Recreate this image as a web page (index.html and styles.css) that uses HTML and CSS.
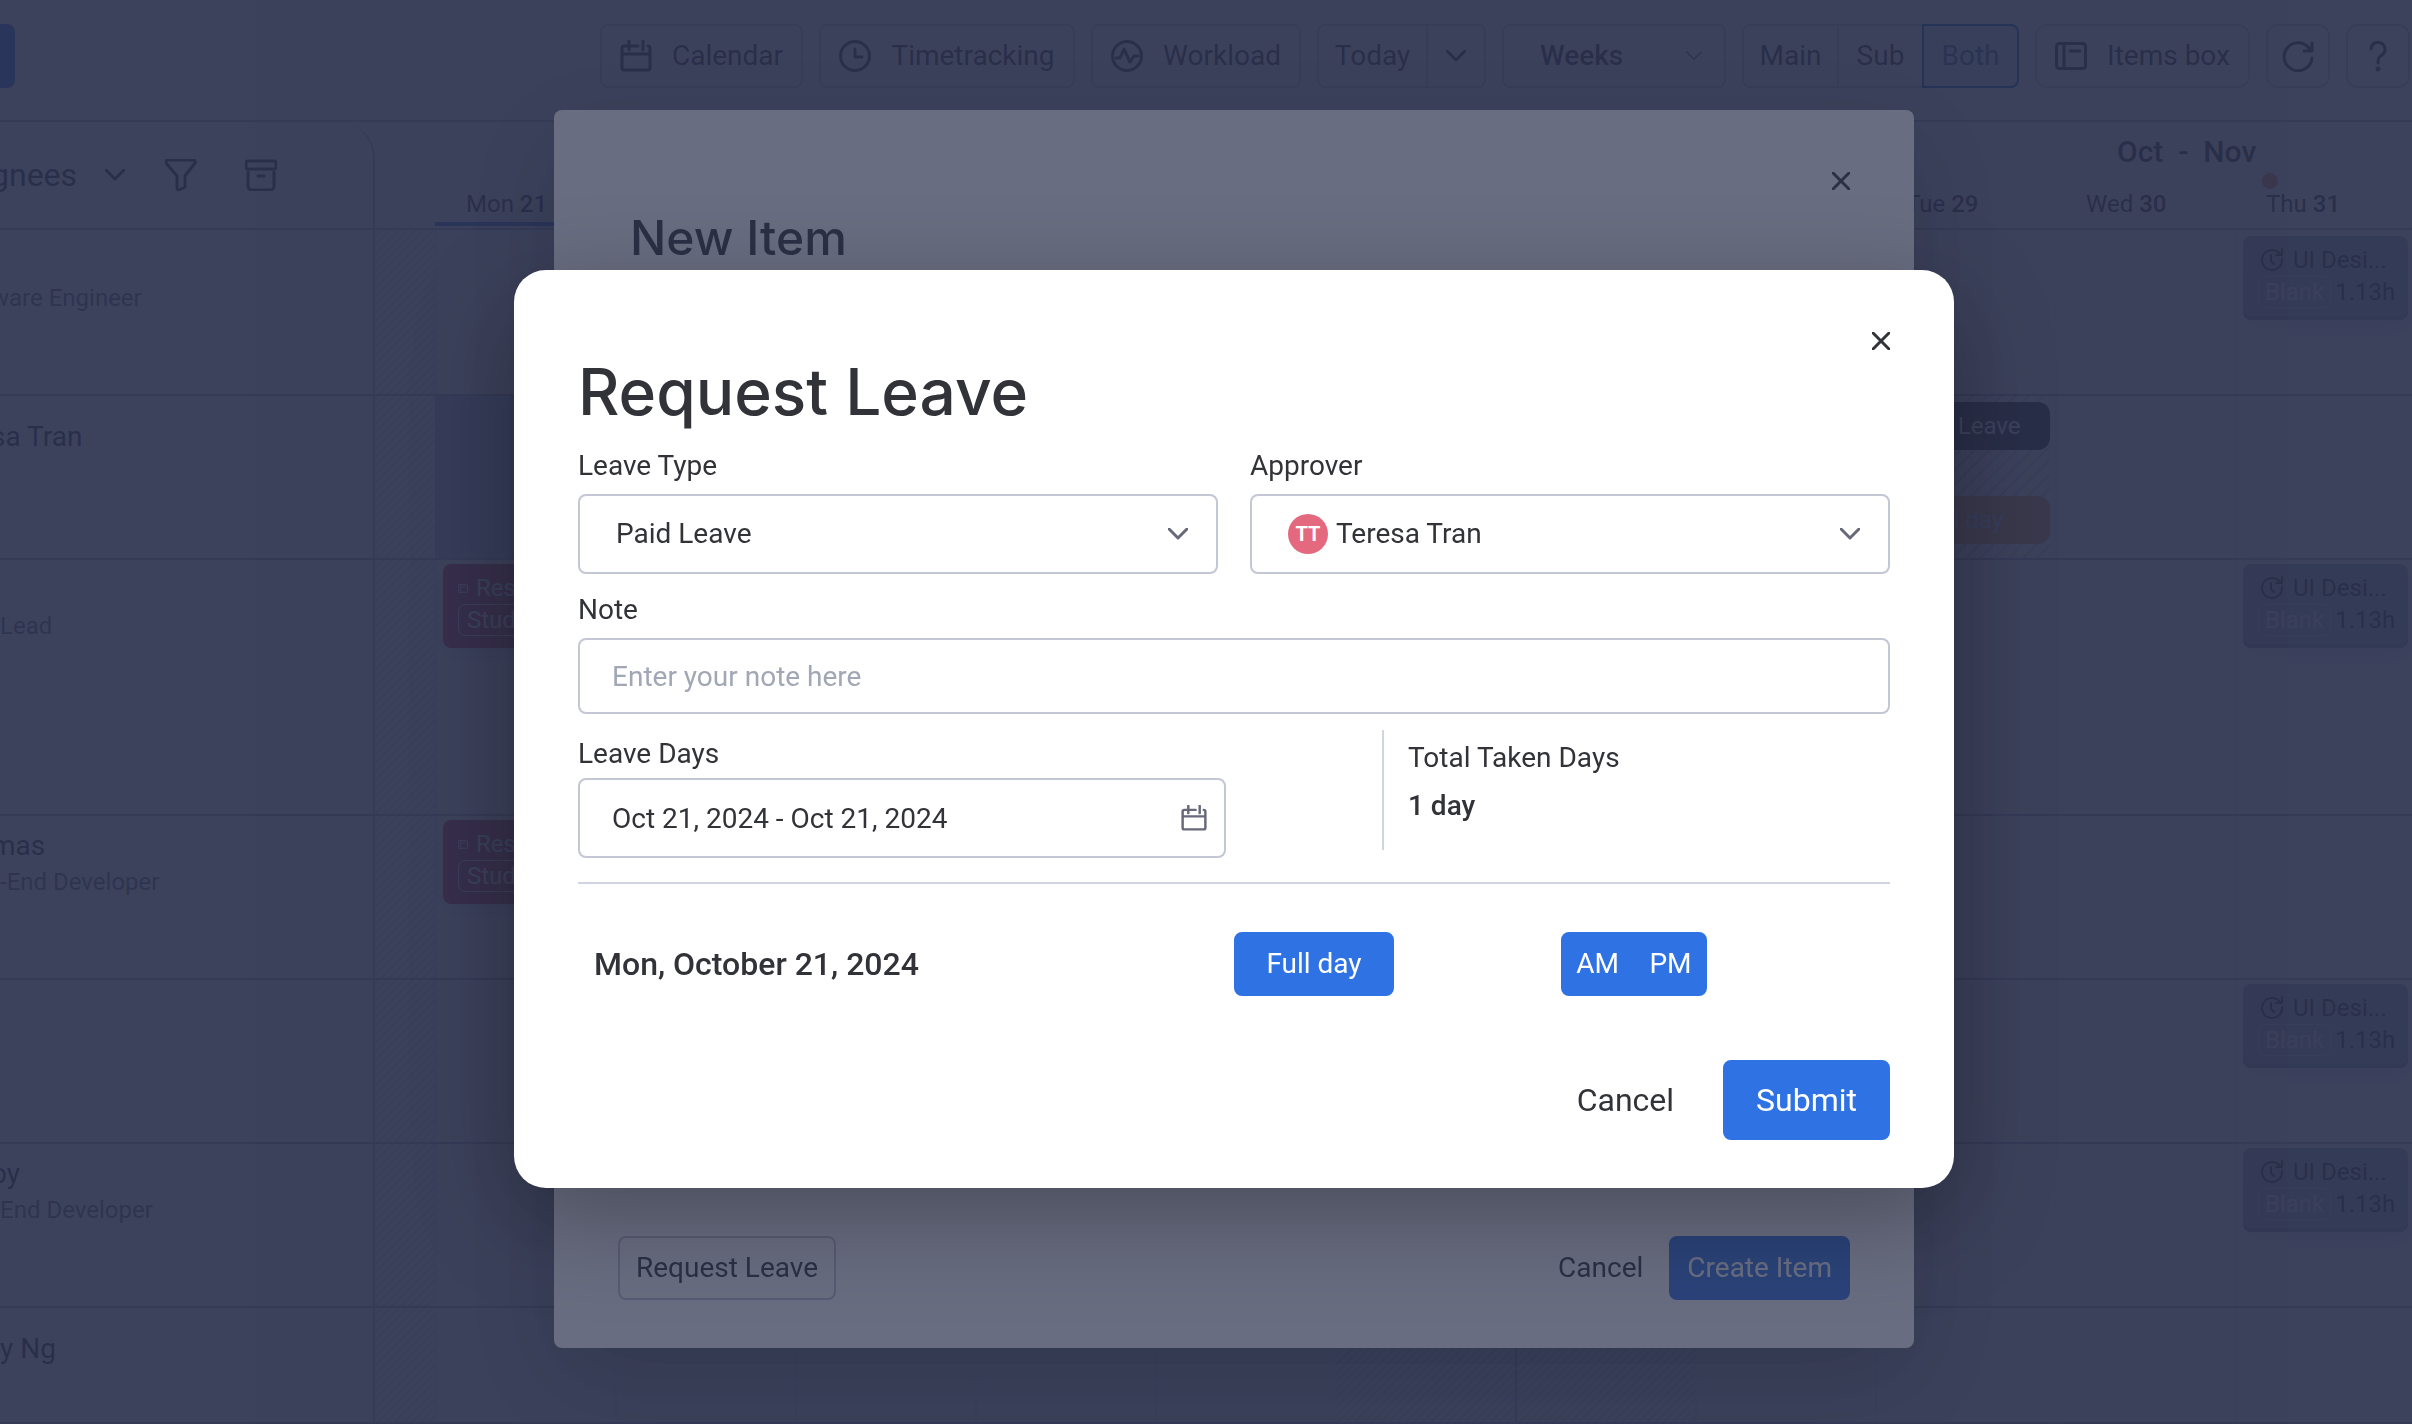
FILE: index.html
```html
<!doctype html>
<html lang="en">
<head>
  <meta charset="UTF-8">
  <title>Request Leave</title>
  <link rel="stylesheet" href="styles.css">
</head>
<body>
  <!-- shared icons -->
  <svg class="sprite" width="0" height="0" aria-hidden="true">
    <symbol id="i-calendar" viewBox="0 0 32 32"><path d="M8 6H4a2 2 0 0 0-2 2v20a2 2 0 0 0 2 2h24a2 2 0 0 0 2-2V8a2 2 0 0 0-2-2M2 14h28M9 1v9M23 1v9M9 6h9"/></symbol>
    <symbol id="i-down" viewBox="0 0 20 12"><path d="M1 1l9 9 9-9"/></symbol>
    <symbol id="i-close" viewBox="0 0 18 18"><path d="M1 1l16 16M17 1L1 17"/></symbol>
    <symbol id="i-redo" viewBox="0 0 24 24"><path d="M20 6a10 10 0 1 0 2 5M22 1v6h-6M11 7v6l3 3"/></symbol>
    <symbol id="i-box" viewBox="0 0 32 28"><rect x="1.500" y="1.500" width="29" height="25" rx="3"/><path d="M9 2v24M15 9h10"/></symbol>
  </svg>

  <div class="app">
    <header class="toolbar">
      <button class="btn primary new-item" aria-label="New"></button>
      <div class="tools">
        <button class="btn w-calendar"><svg class="icon"><use href="#i-calendar"/></svg>Calendar</button>
        <button class="btn w-time"><svg class="icon" viewBox="0 0 32 32"><circle cx="16" cy="16" r="14.500"/><path d="M16 9v8h7"/></svg>Timetracking</button>
        <button class="btn w-load"><svg class="icon" viewBox="0 0 32 32"><circle cx="16" cy="16" r="14.500"/><path d="M5 18h4l4-9 6 13 4-6h4"/></svg>Workload</button>
        <div class="group">
          <button class="btn w-today">Today</button>
          <button class="btn w-more" aria-label="More"><svg class="chev"><use href="#i-down"/></svg></button>
        </div>
        <div class="picker w-weeks">
          <select class="btn" aria-label="Scale"><option>Weeks</option></select>
          <svg class="chev small"><use href="#i-down"/></svg>
        </div>
        <div class="group">
          <button class="btn w-main">Main</button>
          <button class="btn w-sub">Sub</button>
          <button class="btn w-main active">Both</button>
        </div>
        <button class="btn round w-items"><svg class="icon"><use href="#i-box"/></svg>Items box</button>
        <button class="btn round square" aria-label="Refresh"><svg class="icon" viewBox="0 0 32 32"><path d="M27 8a14 14 0 1 0 3 10M30 3v8h-8"/></svg></button>
        <button class="btn round square" aria-label="Help"><svg class="icon" viewBox="0 0 32 32"><path d="M9 9a7 7 0 1 1 11 6c-3 2-4 3-4 8"/><circle cx="16" cy="29" r="1"/></svg></button>
      </div>
    </header>

    <div class="days-head row-grid">
      <div class="assignees">
        <span class="cut">gnees</span>
        <svg class="chev"><use href="#i-down"/></svg>
        <svg class="icon" viewBox="0 0 32 32"><path d="M3 1h26a2 2 0 0 1 1 3L20 17v11l-6 3a2 2 0 0 1-2-2V17L1 4a2 2 0 0 1 2-3z"/></svg>
        <svg class="icon" viewBox="0 0 32 32"><rect x="1" y="2" width="30" height="8" rx="2"/><path d="M3 13v14a4 4 0 0 0 4 4h18a4 4 0 0 0 4-4V13M13 17h6"/></svg>
      </div>
      <div class="day today">Mon <b>21</b></div>
      <div class="day tue">Tue <b>29</b></div>
      <div class="day wed">Wed <b>30</b><span class="month">Oct&nbsp; -&nbsp; Nov</span></div>
      <div class="day thu">Thu <b>31</b><i class="dot"></i></div>
    </div>

    <div class="board">
      <div class="columns row-grid">
        <i class="edge"></i><i class="off"></i><i></i><i></i><i></i><i></i><i></i><i class="off"></i><i class="off sun"></i><i></i><i></i><i></i><i></i>
      </div>
      <div class="row row-grid">
        <div class="person"><p class="name">&nbsp;</p><p class="job cut">ware Engineer</p></div>
        <div class="card thu">
          <p><svg class="redo"><use href="#i-redo"/></svg>UI Desi...</p>
          <p><span class="tag">Blank</span>1.13h</p>
        </div>
      </div>
      <div class="row row-grid">
        <div class="person single"><p class="name cut">sa Tran</p></div>
        <div class="away"></div>
        <div class="leave tue">
          <span class="bar dark">Paid Leave</span>
          <span class="bar orange">Full day</span>
        </div>
      </div>
      <div class="row tall row-grid">
        <div class="person"><p class="name">&nbsp;</p><p class="job">Lead</p></div>
        <div class="card red">
          <p><svg class="mini"><use href="#i-box"/></svg>Res</p>
          <p><span class="tag">Stud</span></p>
        </div>
        <div class="card thu">
          <p><svg class="redo"><use href="#i-redo"/></svg>UI Desi...</p>
          <p><span class="tag">Blank</span>1.13h</p>
        </div>
      </div>
      <div class="row row-grid">
        <div class="person"><p class="name cut">mas</p><p class="job">-End Developer</p></div>
        <div class="card red">
          <p><svg class="mini"><use href="#i-box"/></svg>Res</p>
          <p><span class="tag">Stud</span></p>
        </div>
      </div>
      <div class="row row-grid">
        <div class="person"></div>
        <div class="card thu">
          <p><svg class="redo"><use href="#i-redo"/></svg>UI Desi...</p>
          <p><span class="tag">Blank</span>1.13h</p>
        </div>
      </div>
      <div class="row row-grid">
        <div class="person"><p class="name cut">oy</p><p class="job">End Developer</p></div>
        <div class="card thu">
          <p><svg class="redo"><use href="#i-redo"/></svg>UI Desi...</p>
          <p><span class="tag">Blank</span>1.13h</p>
        </div>
      </div>
      <div class="row row-grid">
        <div class="person single"><p class="name">y Ng</p></div>
      </div>
    </div>
  </div>

  <!-- new item dialog -->
  <div class="overlay">
    <section class="modal item-modal">
      <div class="modal-head"><button class="close" aria-label="Close"><svg><use href="#i-close"/></svg></button></div>
      <div class="modal-body">
        <h2>New Item</h2>
        <div class="modal-foot">
          <button class="btn request">Request Leave</button>
          <button class="btn plain">Cancel</button>
          <button class="btn primary">Create Item</button>
        </div>
      </div>
    </section>
  </div>

  <!-- request leave dialog -->
  <div class="overlay">
    <form class="modal leave-modal">
      <div class="modal-head"><button type="button" class="close" aria-label="Close"><svg><use href="#i-close"/></svg></button></div>
      <div class="modal-body">
        <h1>Request Leave</h1>
        <div class="two">
          <div class="field">
            <label for="type">Leave Type</label>
            <div class="picker">
              <select id="type"><option>Paid Leave</option></select>
              <svg class="chev"><use href="#i-down"/></svg>
            </div>
          </div>
          <div class="field">
            <label for="approver">Approver</label>
            <div class="picker">
              <span class="avatar">TT</span>
              <select id="approver" class="with-avatar"><option>Teresa Tran</option></select>
              <svg class="chev"><use href="#i-down"/></svg>
            </div>
          </div>
        </div>
        <div class="field note">
          <label for="note">Note</label>
          <input id="note" type="text" placeholder="Enter your note here">
        </div>
        <div class="period">
          <div class="field dates">
            <label for="days">Leave Days</label>
            <div class="picker">
              <input id="days" type="text" value="Oct 21, 2024 - Oct 21, 2024">
              <svg class="cal"><use href="#i-calendar"/></svg>
            </div>
          </div>
          <div class="total">
            <p>Total Taken Days</p>
            <p class="strong">1 day</p>
          </div>
        </div>
        <div class="day-row">
          <span class="date">Mon, October 21, 2024</span>
          <div><button type="button" class="btn primary full">Full day</button></div>
          <div class="half">
            <button type="button" class="btn primary">AM</button>
            <button type="button" class="btn primary">PM</button>
          </div>
        </div>
        <div class="actions">
          <button type="button" class="btn big plain">Cancel</button>
          <button type="button" class="btn big primary">Submit</button>
        </div>
      </div>
    </form>
  </div>
</body>
</html>
```

FILE: styles.css
```css
* { margin: 0; padding: 0; box-sizing: border-box; }
body { font: 28px/36px Roboto, "Liberation Sans", sans-serif; color: #323338; background: #fff; height: 100vh; overflow: hidden; }
button, input, select { font: inherit; color: inherit; }
svg { fill: none; stroke: currentColor; stroke-width: 3; stroke-linecap: round; stroke-linejoin: round; flex: none; }
.sprite { position: absolute; }
.icon { width: 32px; height: 32px; }
.chev { width: 20px; height: 12px; stroke-width: 3; }
.chev.small { width: 16px; height: 10px; stroke-width: 2; }

/* buttons */
.btn { display: flex; align-items: center; justify-content: center; gap: 20px; height: 64px; padding: 0 16px; border: 2px solid #c3c6d4; border-radius: 8px; background: none; white-space: nowrap; }
.btn.primary { background: #2f72e3; border-color: #2f72e3; color: #fff; }
.btn.plain { border-color: transparent; }
.btn.round { border-radius: 12px; }
.btn.square { width: 64px; padding: 0; }

/* page behind the dialogs */
.app { height: 100vh; overflow: hidden; }
.toolbar { display: flex; justify-content: space-between; height: 122px; padding: 24px 2px 0 0; border-bottom: 2px solid #b0b4c8; }
.new-item { width: 15px; padding: 0; border-radius: 0 8px 8px 0; }
.tools { display: flex; align-items: flex-start; gap: 16px; }
.w-calendar { width: 203px; }
.w-time { width: 256px; }
.w-load { width: 210px; }
.w-today { width: 111px; }
.w-more { width: 60px; }
.w-weeks { width: 224px; }
.w-main { width: 97px; }
.w-sub { width: 87px; }
.w-items { width: 215px; }
.group { display: flex; }
.group .btn { border-radius: 0; }
.group .btn + .btn { margin-left: -2px; }
.group .btn:first-child { border-radius: 8px 0 0 8px; }
.group .btn:last-child { border-radius: 0 8px 8px 0; }
.group .active { background: #cce5ff; border-color: #0060d0; color: #4a6a9c; }
.picker { position: relative; }
.picker select { width: 100%; appearance: none; }
.picker .chev { position: absolute; right: 30px; top: calc(50% - 6px); color: #676879; }
.picker .chev.small { right: 24px; top: calc(50% - 5px); }
.w-weeks select { padding: 0 36px; font-weight: 500; }

.row-grid { display: grid; grid-template-columns: 375px 60px repeat(10, 180px) minmax(0, 1fr); }
.days-head { height: 108px; border-bottom: 2px solid #b0b4c8; }
.assignees { display: flex; align-items: center; font-size: 32px; border-right: 2px solid #b0b4c8; border-top-right-radius: 36px; }
.assignees .chev { margin: 0 40px 0 28px; }
.assignees .icon + .icon { margin-left: 48px; }
/* labels that run in from the scrolled-off side */
.cut { margin-left: -9px; }
.day { position: relative; grid-row: 1; padding: 64px 0 0 31px; font-size: 24px; white-space: nowrap; }
.today { grid-column: 3; border-bottom: 4px solid #2f72e3; margin-bottom: 2px; }
.tue { grid-column: 11; }
.wed { grid-column: 12; }
.thu { grid-column: 13; }
.day b { font-weight: 500; }
.month { position: absolute; left: 62px; top: 12px; font-size: 30px; font-weight: 500; }
.dot { position: absolute; left: 27px; top: 51px; width: 16px; height: 16px; border-radius: 50%; background: #e88a60; }

.board { position: relative; padding-top: 2px; }
.columns { position: absolute; left: 0; right: 0; top: 0; bottom: 0; }
.columns i { border-left: 2px solid #e6e8f0; }
.columns .edge { border: 0; border-right: 2px solid #b0b4c8; }
.columns .off { border-left: 0; background: repeating-linear-gradient(135deg, #fff 0, #fff 4px, #dde0ec 4px, #dde0ec 6px); }
.columns .sun { border-left: 2px solid #b0b4c8; }
.row { position: relative; height: 164px; grid-template-rows: 162px; border-bottom: 2px solid #a8acc2; }
.row.tall { height: 256px; grid-template-rows: 254px; }
.row:last-child { height: 116px; grid-template-rows: 114px; }
.row > * { grid-row: 1; }
.person { padding-top: 12px; white-space: nowrap; overflow: hidden; }
.person.single { padding-top: 23px; }
.job { font-size: 24px; color: #676879; }
.away { grid-column: 3 / 5; background: #b8c8e8; }
.card { display: flex; flex-direction: column; justify-content: center; height: 84px; margin: 4px 4px 0 8px; padding: 0 15px 4px; border-radius: 8px; background: #a9b0bc; font-size: 24px; line-height: 32px; overflow: hidden; box-shadow: inset 0 -4px 0 #949bb0, 0 8px 24px #d4d9ee; }
.card p { display: flex; align-items: center; gap: 4px; height: 32px; white-space: nowrap; }
.card .redo { width: 24px; height: 24px; margin: 0 5px 0 2px; stroke-width: 2; }
.card .mini { width: 10px; height: 9px; margin-right: 4px; }
.tag { padding: 0 6px; border: 1px solid #c8ccd8; border-radius: 8px; line-height: 30px; color: #e4e6ee; }
.card.red { grid-column: 3; background: #bb3354; color: #e4f0ff; box-shadow: 0 8px 24px #d8dcee; }
.red .tag { padding: 0 8px; border-color: #d0d8ea; color: #e4f0ff; }
.leave { display: flex; flex-direction: column; gap: 46px; margin-right: 5px; padding-top: 6px; background: repeating-linear-gradient(135deg, #fff 0, #fff 8px, #ccd2e8 8px, #ccd2e8 10px); }
.bar { height: 48px; border-radius: 12px; line-height: 48px; text-align: center; font-size: 24px; color: #fff; }
.bar.dark { background: #333; }
.bar.orange { background: #d89f58; color: #c0d0ff; }

/* dialogs */
.overlay { position: fixed; left: 0; right: 0; top: 0; bottom: 0; display: flex; align-items: center; justify-content: center; padding: 34px 0 0 56px; background: rgba(41, 47, 76, .7); }
.modal { width: 1440px; max-width: 96%; border-radius: 32px; background: #fff; box-shadow: 0 30px 100px rgba(0, 0, 0, .3); }
.modal-head { display: flex; justify-content: flex-end; padding: 48px 50px 0; }
.modal-body { padding: 0 64px 48px; }
.close { display: flex; align-items: center; justify-content: center; width: 46px; height: 46px; border: 0; background: none; }
.close svg { width: 18px; height: 18px; }
.item-modal { width: 1360px; border-radius: 8px; }
h1 { margin-bottom: 28px; font: 500 64px/56px Inter, sans-serif; }
h2 { min-height: 1032px; padding: 2px 12px 0; font: 500 48px/64px Inter, sans-serif; }
.modal-foot { display: flex; gap: 8px; }
.modal-foot .request { margin-right: auto; }

.two { display: grid; grid-template-columns: 1fr 1fr; gap: 32px; }
.field { display: flex; flex-direction: column; gap: 10px; }
.field select, .field input { display: block; width: 100%; height: 80px; padding: 0 36px; border: 2px solid #c3c6d4; border-radius: 8px; background: #fff; }
.field input { padding: 0 32px; }
.field .with-avatar { padding-left: 84px; }
.field input::placeholder { color: #a1a7b5; }
.avatar { position: absolute; left: 38px; top: 20px; width: 40px; height: 40px; border-radius: 50%; background: #e5697e; color: #fff; font-size: 20px; font-weight: 700; line-height: 40px; text-align: center; }
.note { margin-top: 18px; }
.note input { height: 76px; }
.period { display: flex; justify-content: space-between; margin-top: 16px; padding-bottom: 24px; border-bottom: 2px solid #d0d4e4; }
.dates { width: 648px; padding-top: 6px; gap: 6px; }
.cal { position: absolute; right: 19px; top: 27px; width: 26px; height: 26px; color: #676879; }
.total { display: flex; flex-direction: column; gap: 12px; width: 508px; height: 120px; padding: 10px 24px; border-left: 2px solid #d0d4e4; }
.strong { font-weight: 500; }
.day-row { display: grid; grid-template-columns: 1fr 327px 329px; align-items: center; margin-top: 48px; padding-left: 16px; }
.date { font-size: 32px; font-weight: 500; }
.full { width: 160px; }
.half { display: flex; }
.half .btn { width: 73px; padding: 0; border-radius: 8px 0 0 8px; }
.half .btn + .btn { border-radius: 0 8px 8px 0; }
.actions { display: flex; justify-content: flex-end; gap: 16px; margin-top: 64px; }
.big { height: 80px; padding: 0 31px; font-size: 32px; }
```
